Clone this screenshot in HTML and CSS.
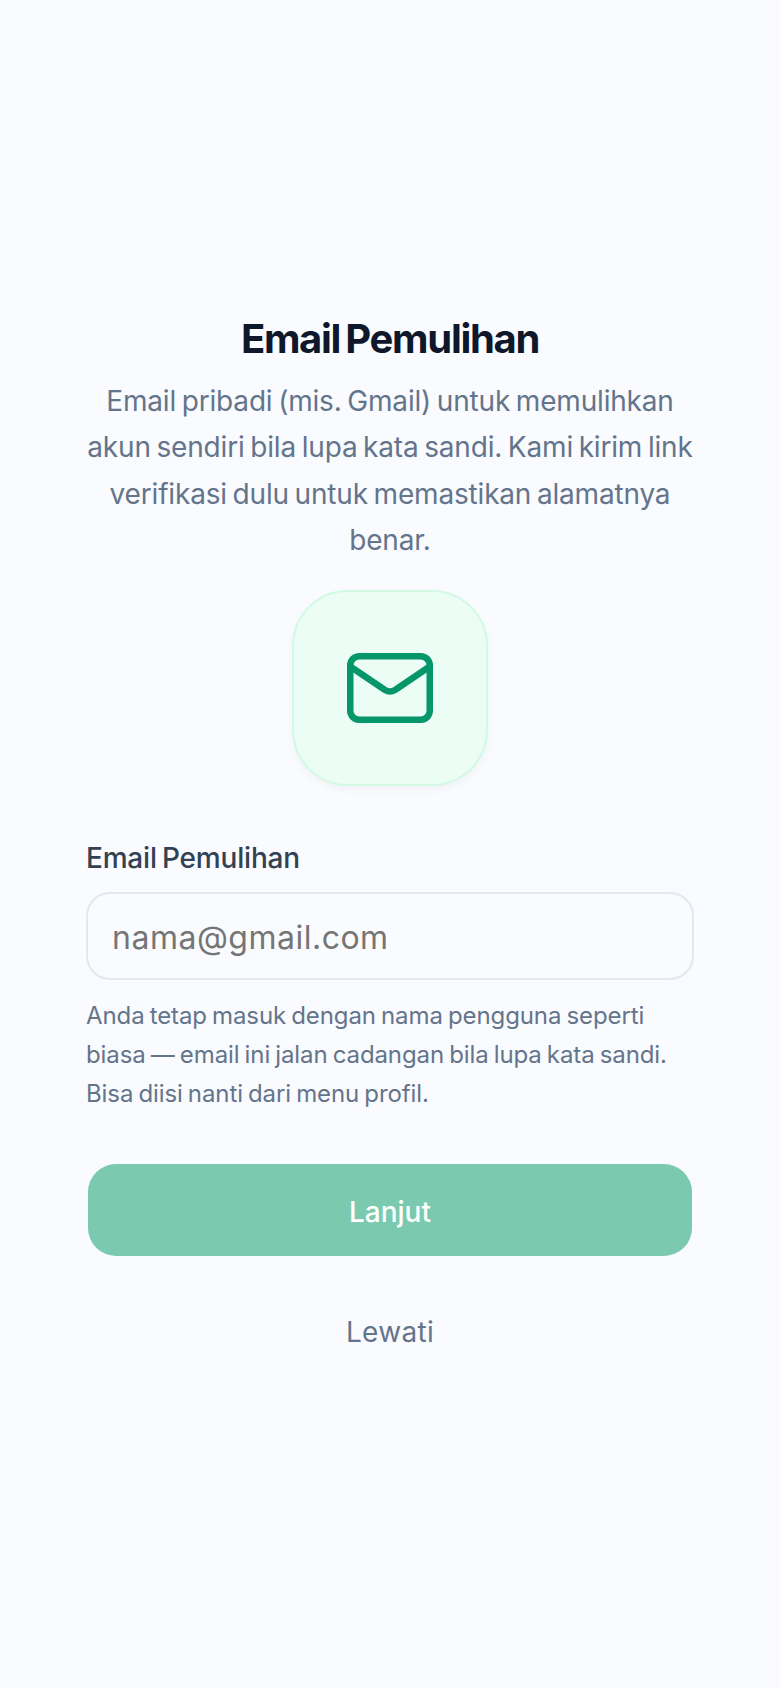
FILE: index.html
```html
<!DOCTYPE html>
<html>
<head>
    <meta charset="utf-8" />
    <meta name="viewport" content="width=device-width" />
    <title>Email Pemulihan</title>
    <link rel="stylesheet" href="styles.css">
</head>
<body>
    <div class="screen">
        <h1 class="title">Email Pemulihan</h1>
        <p class="subtitle">Email pribadi (mis. Gmail) untuk memulihkan akun sendiri bila lupa kata sandi. Kami kirim link verifikasi dulu untuk memastikan alamatnya benar.</p>

        <div class="icon-box">
            <svg width="86" height="70" viewBox="0 0 86 70" fill="none" stroke="#059669" stroke-width="6.5" stroke-linejoin="round">
                <rect x="3.25" y="3.25" width="79.5" height="63.5" rx="9" />
                <path d="M4 14 L38 37 Q43 40 48 37 L82 14" />
            </svg>
        </div>

        <div class="field">
            <label class="label" for="email">Email Pemulihan</label>
            <input class="input" id="email" type="text" placeholder="nama@gmail.com" />
            <p class="hint">Anda tetap masuk dengan nama pengguna seperti biasa — email ini jalan cadangan bila lupa kata sandi. Bisa diisi nanti dari menu profil.</p>
        </div>

        <button class="btn-next">Lanjut</button>
        <a class="skip">Lewati</a>
    </div>
</body>
</html>
```

FILE: styles.css
```css
* {
  box-sizing: border-box;
}

body {
  margin: 0;
  background: #f9fbfe;
  font-family: "Inter", "Noto Sans", sans-serif;
}

.screen {
  width: 780px;
  height: 1688px;
  padding: 0 86px 28px;
  display: flex;
  flex-direction: column;
  justify-content: center;
  align-items: center;
}

.title {
  margin: 0 0 9px;
  font-size: 40px;
  font-weight: 700;
  letter-spacing: -1.3px;
  word-spacing: -3px;
  line-height: 60px;
  color: #0f172a;
}

.subtitle {
  margin: 0 0 26px;
  font-size: 28px;
  line-height: 46.5px;
  letter-spacing: -0.18px;
  word-spacing: -2px;
  text-align: center;
  color: #64748b;
}

.icon-box {
  width: 196px;
  height: 196px;
  border-radius: 56px;
  background: #ecfdf5;
  border: 2px solid #d1fae5;
  box-shadow: 0 4px 8px rgba(15, 23, 42, 0.04);
  display: flex;
  align-items: center;
  justify-content: center;
}

.field {
  width: 100%;
  margin-top: 52px;
}

.label {
  display: block;
  font-size: 28px;
  font-weight: 500;
  line-height: 40px;
  letter-spacing: -0.2px;
  word-spacing: -2px;
  color: #334155;
  margin-bottom: 14px;
}

.input {
  display: block;
  width: 100%;
  height: 88px;
  padding: 4px 24px 0;
  border: 2px solid #e2e8f0;
  border-radius: 24px;
  background: #f9fbfe;
  font-family: inherit;
  font-size: 32px;
  letter-spacing: 0.5px;
}

.input::placeholder {
  color: #757575;
}

.hint {
  margin: 16px 0 0;
  font-size: 24px;
  line-height: 39px;
  letter-spacing: -0.1px;
  word-spacing: -1.5px;
  color: #64748b;
}

.btn-next {
  width: 604px;
  height: 92px;
  margin-top: 51px;
  padding: 4px 0 0;
  border: none;
  border-radius: 28px;
  background: #7bcab0;
  color: #fff;
  font-family: inherit;
  font-size: 28px;
  font-weight: 500;
}

.skip {
  margin-top: 56px;
  font-size: 28px;
  line-height: 40px;
  letter-spacing: 0.3px;
  color: #64748b;
}
```
